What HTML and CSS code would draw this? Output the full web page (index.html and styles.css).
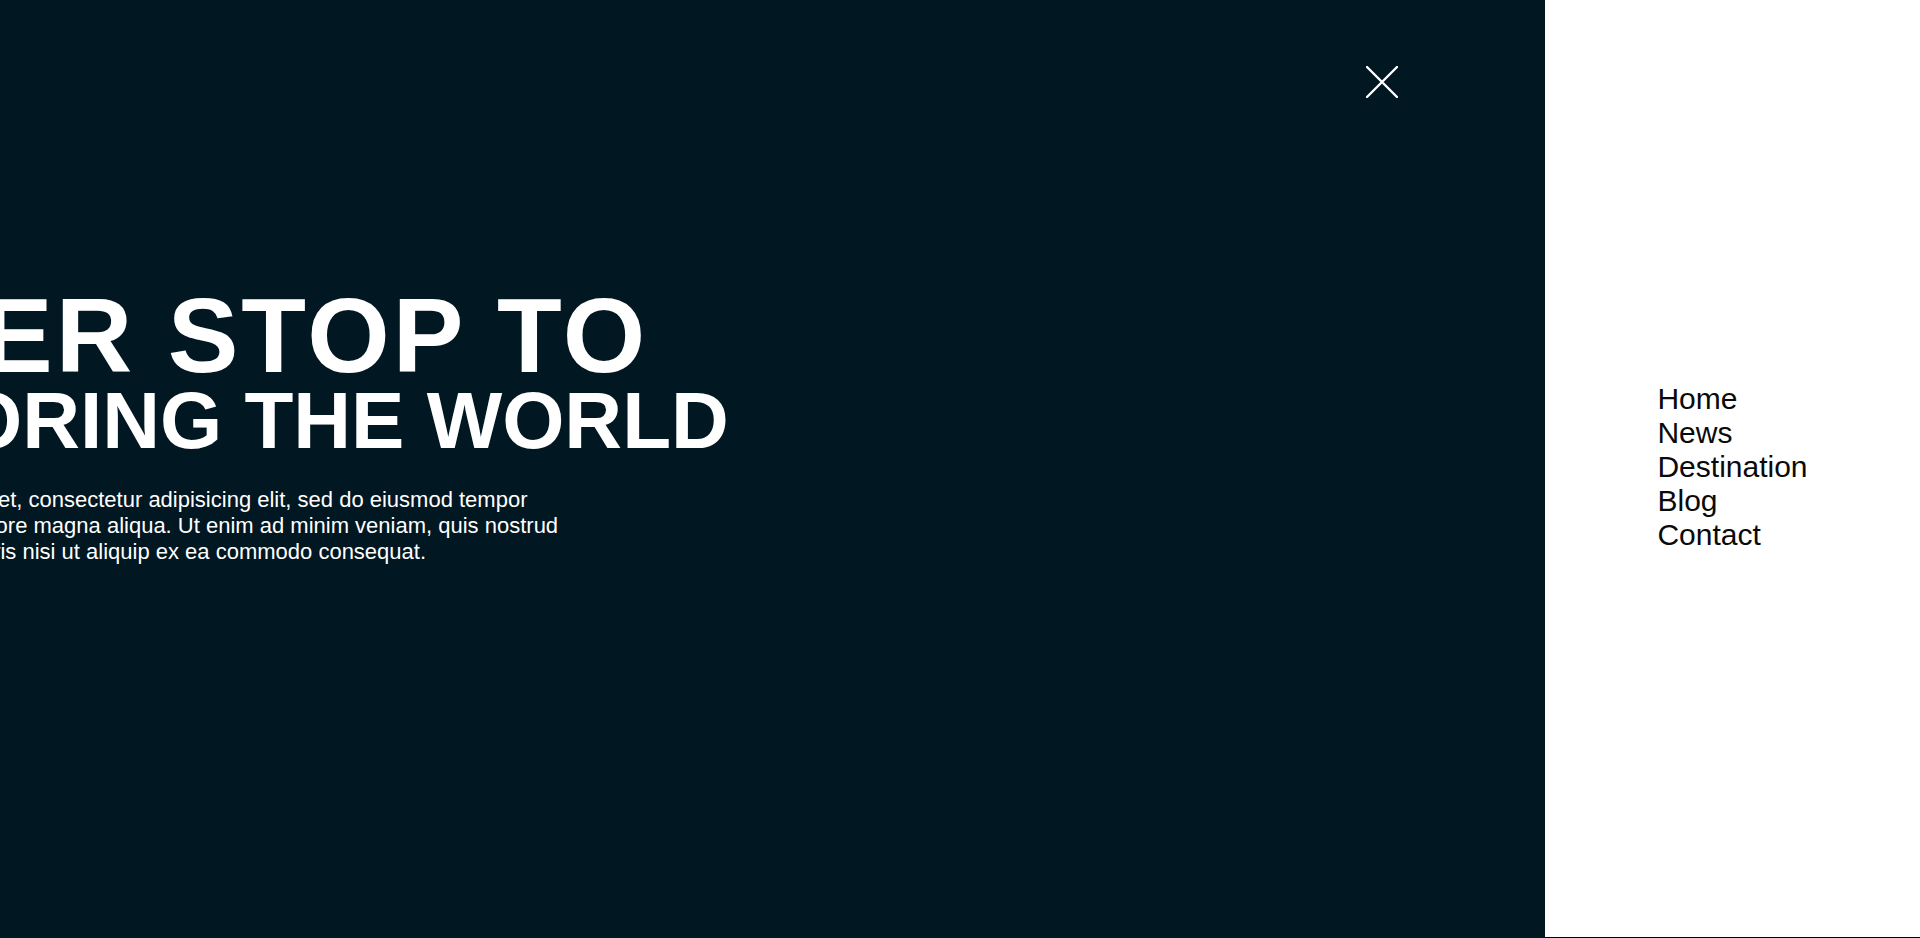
FILE: index.html
```html
<!DOCTYPE html>
<html lang="en">
<head>
<meta charset="utf-8">
<title>Never stop to exploring the world</title>
<link rel="stylesheet" href="styles.css">
</head>
<body>
<div class="page">
  <main class="hero">
    <button class="close" type="button" aria-label="Close menu">
      <svg class="close-icon" viewBox="0 0 32 32" width="32" height="32" aria-hidden="true">
        <path d="M1 1 L31 31 M31 1 L1 31" fill="none" stroke="#ffffff" stroke-width="2.4" stroke-linecap="round"/>
      </svg>
    </button>
    <div class="hero-content">
      <h1 class="title">
        <span class="title-top">Never stop to</span>
        <span class="title-bottom">Exploring the world</span>
      </h1>
      <p class="lead">Lorem ipsum dolor sit amet, consectetur adipisicing elit, sed do eiusmod tempor incididunt ut labore et dolore magna aliqua. Ut enim ad minim veniam, quis nostrud exercitation ullamco laboris nisi ut aliquip ex ea commodo consequat.</p>
    </div>
  </main>
  <aside class="menu">
    <nav class="menu-nav">
      <ul class="menu-list">
        <li><a class="menu-link" href="#">Home</a></li>
        <li><a class="menu-link" href="#">News</a></li>
        <li><a class="menu-link" href="#">Destination</a></li>
        <li><a class="menu-link" href="#">Blog</a></li>
        <li><a class="menu-link" href="#">Contact</a></li>
      </ul>
    </nav>
  </aside>
</div>
</body>
</html>
```

FILE: styles.css
```css
html, body {
  margin: 0;
  padding: 0;
  height: 100%;
}

body {
  font-family: "Liberation Sans", Arial, sans-serif;
  background: #000000;
}

.page {
  display: flex;
  height: 100vh;
  overflow: hidden;
}

.hero {
  flex: 1;
  position: relative;
  overflow: hidden;
  background: #011722;
  color: #ffffff;
}

.hero-content {
  margin-left: -249px;
  padding-top: 287px;
  width: 1100px;
}

.title {
  margin: 0;
  font-weight: 700;
  text-transform: uppercase;
  white-space: nowrap;
}

.title-top {
  display: block;
  margin-left: 4px;
  font-size: 106px;
  line-height: 96px;
  letter-spacing: 3px;
}

.title-bottom {
  display: block;
  font-size: 80px;
  line-height: 76px;
}

.lead {
  margin: 28px 0 0;
  max-width: 840px;
  font-size: 22px;
  line-height: 26px;
}

.close {
  position: absolute;
  top: 66px;
  right: 147px;
  padding: 0;
  border: 0;
  background: none;
  cursor: pointer;
  line-height: 0;
}

.close-icon {
  display: block;
}

.menu {
  width: 375px;
  flex: none;
  box-sizing: border-box;
  padding-bottom: 3px;
  background: #ffffff;
  border-bottom: 1px solid #000000;
  display: flex;
  align-items: center;
  justify-content: center;
}

.menu-list {
  list-style: none;
  margin: 0;
  padding: 0;
}

.menu-link {
  color: #0a0a0a;
  text-decoration: none;
  font-size: 30px;
}
```
